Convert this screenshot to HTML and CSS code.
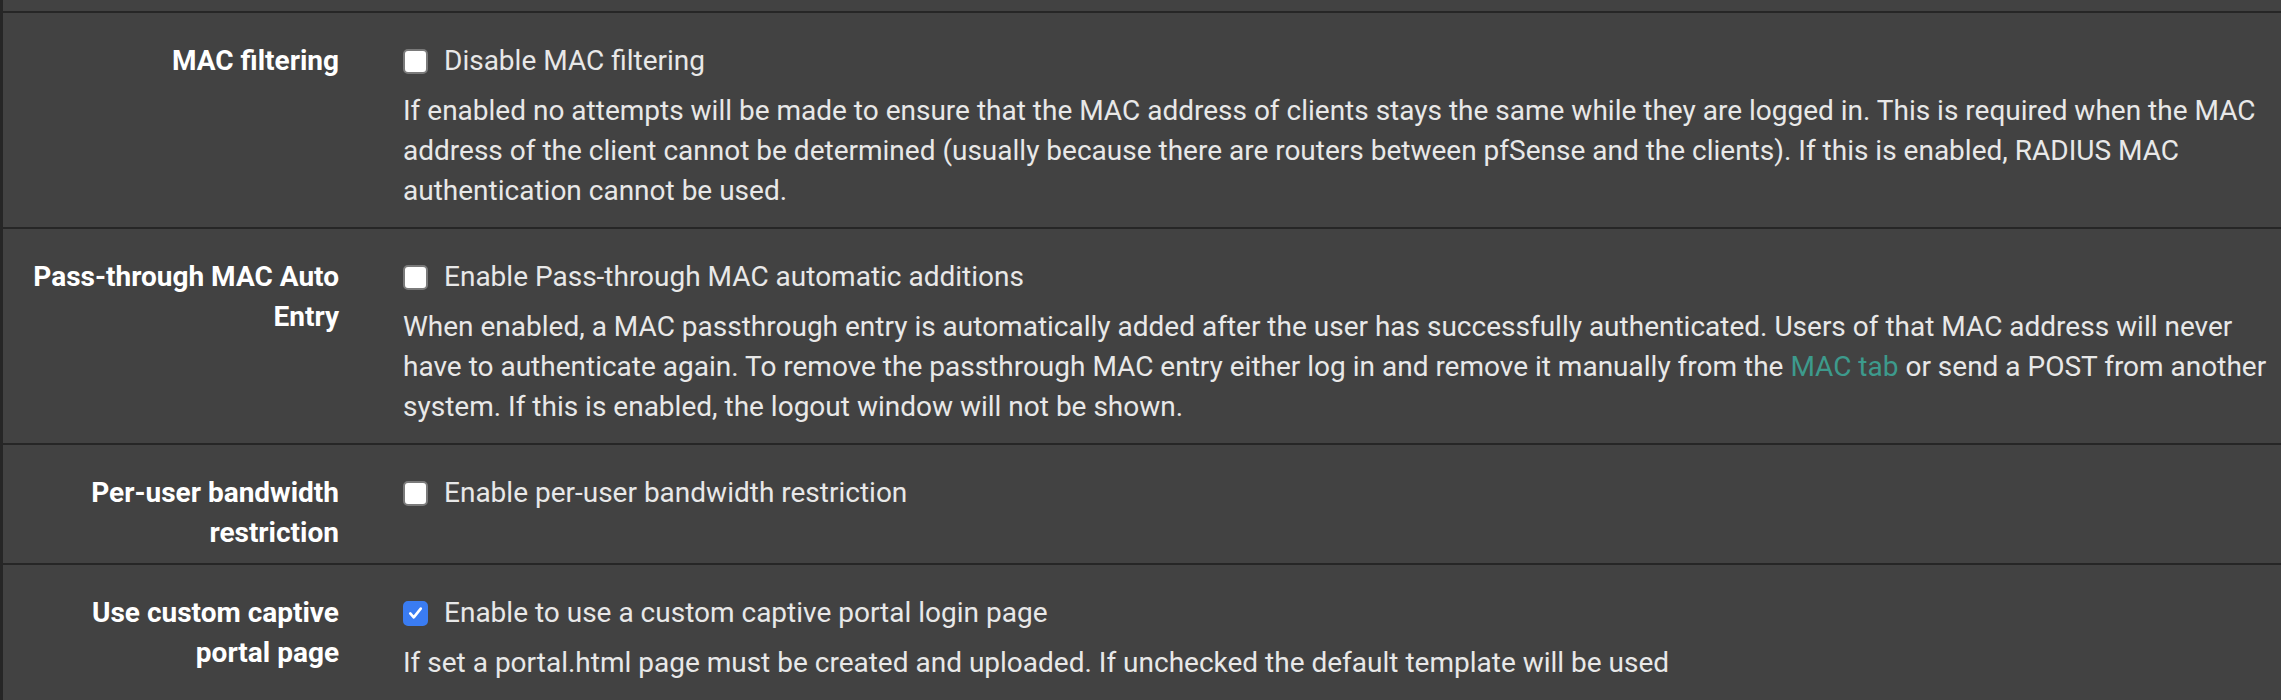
FILE: index.html
```html
<!DOCTYPE html>
<html lang="en">
<head>
  <meta charset="UTF-8" />
  <title>Captive Portal - Settings</title>
  <link rel="stylesheet" href="styles.css">
</head>
<body>

  <div class="panel">
    <div class="top-strip"></div>

    <div class="form-group">
      <div class="control-label">MAC filtering</div>
      <div class="field">
        <label class="check"><span class="box"></span> Disable MAC filtering</label>
        <span class="help-block">If enabled no attempts will be made to ensure that the MAC address of clients stays the same while they are logged in. This is required when the MAC address of the client cannot be determined (usually because there are routers between pfSense and the clients). If this is enabled, RADIUS MAC authentication cannot be used.</span>
      </div>
    </div>

    <div class="form-group">
      <div class="control-label">Pass-through MAC Auto Entry</div>
      <div class="field">
        <label class="check"><span class="box"></span> Enable Pass-through MAC automatic additions</label>
        <span class="help-block">When enabled, a MAC passthrough entry is automatically added after the user has successfully authenticated. Users of that MAC address will never have to authenticate again. To remove the passthrough MAC entry either log in and remove it manually from the <a href="#">MAC tab</a> or send a POST from another system. If this is enabled, the logout window will not be shown.</span>
      </div>
    </div>

    <div class="form-group">
      <div class="control-label">Per-user bandwidth restriction</div>
      <div class="field">
        <label class="check"><span class="box"></span> Enable per-user bandwidth restriction</label>
      </div>
    </div>

    <div class="form-group">
      <div class="control-label">Use custom captive portal page</div>
      <div class="field">
        <label class="check"><span class="box checked"><svg viewBox="0 0 24 24" width="24" height="24"><path d="M6 12.5l4 4.5 8-10" fill="none" stroke="#fff" stroke-width="3" stroke-linecap="round" stroke-linejoin="round"/></svg></span> Enable to use a custom captive portal login page</label>
        <span class="help-block">If set a portal.html page must be created and uploaded. If unchecked the default template will be used</span>
      </div>
    </div>
  </div>

</body>
</html>
```

FILE: styles.css
```css
body {
  margin: 0;
  padding: 0;
  background-color: #424242;
  font-family: Roboto, 'Liberation Sans', sans-serif;
  font-size: 28px;
  line-height: 40px;
  color: #e8e8e8;
}

.panel {
  border-left: 3px solid #262626;
  min-height: 700px;
  overflow: hidden;
}

.top-strip {
  height: 11px;
}

.form-group {
  display: flex;
  border-top: 2px solid #262626;
  padding: 28px 0 10px;
}

.control-label {
  width: 320px;
  margin-left: 16px;
  flex-shrink: 0;
  text-align: right;
  font-weight: bold;
  color: #ffffff;
}

.field {
  width: 1876px;
  margin-left: 64px;
  flex-shrink: 0;
}

.check {
  display: flex;
  align-items: center;
  gap: 16px;
}

.box {
  width: 25px;
  height: 25px;
  box-sizing: border-box;
  border: 2px solid #7a7a7a;
  border-radius: 5px;
  background-color: #ffffff;
  display: flex;
  align-items: center;
  justify-content: center;
}

.box.checked {
  background-color: #3a7cf2;
  border-color: #3a7cf2;
}

.help-block {
  display: block;
  margin-top: 10px;
  margin-bottom: 6px;
}

.help-block a {
  color: #3d9a8c;
  text-decoration: none;
}
```
